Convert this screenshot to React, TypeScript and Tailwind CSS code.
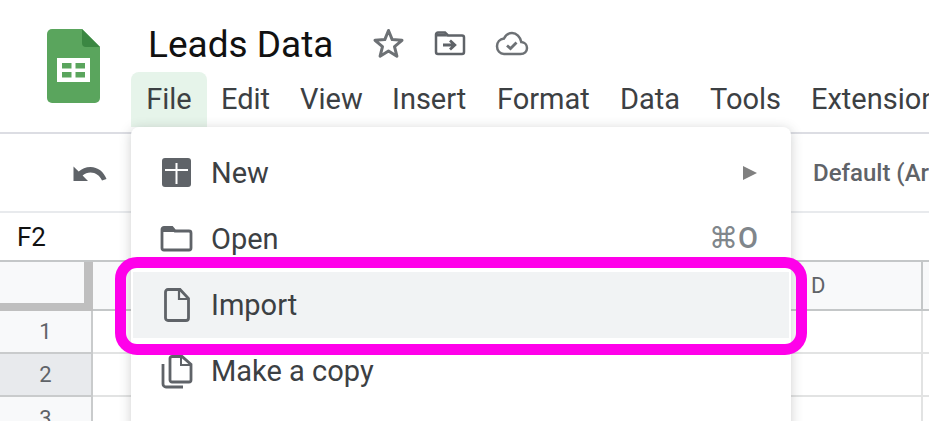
const menus = [
  { label: "Edit", w: "w-[79px]" },
  { label: "View", w: "w-[92px]" },
  { label: "Insert", w: "w-[105px]" },
  { label: "Format", w: "w-[123px]" },
  { label: "Data", w: "w-[90px]" },
  { label: "Tools", w: "w-[101px]" },
  { label: "Extensions", w: "w-[150px]" },
];

const SheetsLogo = () => (
  <svg width="53" height="74" viewBox="0 0 53 74">
    <path d="M5 0H35L53 18V69a5 5 0 0 1-5 5H5a5 5 0 0 1-5-5V5a5 5 0 0 1 5-5Z" fill="#5aa55d" />
    <path d="M35 0L53 18H39a4 4 0 0 1-4-4Z" fill="#3b8742" />
    <path d="M10 29H43V53H10Z" fill="#fff" />
    <path d="M15 34H24.500V39.500H15ZM28.500 34H38V39.500H28.500ZM15 43H24.500V48.500H15ZM28.500 43H38V48.500H28.500Z" fill="#5aa55d" />
  </svg>
);

const MenuRow = ({ icon, label, right, active }: { icon: React.ReactNode; label: string; right?: React.ReactNode; active?: boolean }) => (
  <div className={`flex h-[66px] items-center pr-[33px] ${active ? "bg-[#f1f3f4] mx-[2px] pl-[27px]" : "pl-[29px]"}`}>
    <div className="flex w-[33px] justify-center">{icon}</div>
    <span className="ml-[18px] pt-[2px] text-[29px] text-[#3c4043]">{label}</span>
    <div className="ml-auto">{right}</div>
  </div>
);

const App = () => {
  return (
    <div className="relative h-[421px] w-[929px] overflow-hidden bg-white font-['Roboto',sans-serif]">
      {/* title bar */}
      <div className="flex h-[134px] border-b-2 border-[#dcdde3]">
        <div className="ml-[47px] mt-[29px]">
          <SheetsLogo />
        </div>
        <div className="ml-[31px] min-w-0">
          <div className="mt-[18px] flex h-[54px] items-center pl-[17px]">
            <h1 className="text-[37px] leading-[48px] text-[#111]">Leads Data</h1>
            <svg className="mb-[4px] ml-[39px]" width="33" height="32" viewBox="0 0 33 32" fill="none">
              <path d="M16.500 3.500L20.200 12.600L30 13.300L22.500 19.600L24.900 29.200L16.500 24L8.100 29.200L10.500 19.600L3 13.300L12.800 12.600Z" stroke="#6d7175" strokeWidth="3" strokeLinejoin="round" />
            </svg>
            <svg className="mb-[4px] ml-[29px]" width="32" height="25" viewBox="0 0 32 25" fill="none">
              <path d="M2 3.500a2 2 0 0 1 2-2H11L14 4.500H28a2 2 0 0 1 2 2V21a2 2 0 0 1-2 2H4a2 2 0 0 1-2-2Z" stroke="#5f6368" strokeWidth="2.500" />
              <path d="M2 2.500H11L13.500 5.500H2Z" fill="#5f6368" />
              <path d="M9 14H20M16 9.500L20.800 14L16 18.500" stroke="#5f6368" strokeWidth="2.800" />
            </svg>
            <svg className="mb-[3px] ml-[29px]" width="34" height="25" viewBox="0 0 34 25" fill="none">
              <path d="M9 23H25.500C29.500 23 32 20.300 32 17C32 13.600 29.500 11.200 26.300 11C25.300 5.800 21.500 2 17 2C13.200 2 10.500 4.100 9 7.500C4.800 8 2 11.300 2 15.300C2 19.600 5 23 9 23Z" stroke="#6d7175" strokeWidth="2.500" />
              <path d="M12 14.500L15.500 17.500L21.500 11.500" stroke="#6d7175" strokeWidth="2.800" />
            </svg>
          </div>
          <div className="flex h-[55px] w-[900px] items-center">
            <div className="flex h-[55px] w-[76px] items-center justify-center rounded-t-[8px] bg-[#e6f4ea] text-[29px] text-[#3c4043]">
              File
            </div>
            <div className="w-[14px]" />
            {menus.map((m) => (
              <div key={m.label} className={`${m.w} text-[29px] text-[#3c4043]`}>
                {m.label}
              </div>
            ))}
          </div>
        </div>
      </div>

      {/* toolbar */}
      <div className="flex h-[79px] items-center border-b-2 border-[#e8eaed]">
        <svg className="ml-[73px] shrink-0" width="34" height="18" viewBox="0 0 34 18">
          <path d="M17.500 3C12.800 3 8.800 4.800 5.700 7.500L0.500 2.500V17H15L9.600 11.500C11.800 9.600 14.500 8.400 17.500 8.400C22.500 8.400 26.900 11.500 29 16.500L33.500 15C30.900 7.900 24.800 3 17.500 3Z" fill="#5f6368" />
        </svg>
        <span className="ml-[706px] shrink-0 whitespace-nowrap text-[24px] font-medium text-[#5f6368]">Default (Arial)</span>
      </div>

      {/* formula bar */}
      <div className="flex h-[49px] items-center border-b-2 border-[#c4c7c8] pl-[17px] pt-[2px] text-[26px] text-[#111]">
        F2
      </div>

      {/* grid */}
      <div className="grid grid-cols-[93px_1fr] grid-rows-[49px_43px_43px_43px]">
        <div className="border-b-[8px] border-r-[9px] border-[#bfbfbf] bg-[#f8f9fa]" />
        <div className="flex border-b-2 border-[#c4c7c8] bg-[#f8f9fa]">
          <div className="flex w-[830px] items-center justify-between border-r-2 border-[#c4c7c8]">
            <span className="ml-[718px] text-[22px] text-[#5f6368]">D</span>
          </div>
        </div>
        <div className="flex items-center justify-center border-r-2 border-b-2 border-[#c9cbcc] bg-[#f8f9fa] text-[22px] text-[#5f6368]">1</div>
        <div className="border-b-2 border-[#e2e3e3]">
          <div className="h-full w-[830px] border-r-2 border-[#e2e3e3]" />
        </div>
        <div className="flex items-center justify-center border-r-2 border-b-2 border-[#c9cbcc] bg-[#e8eaed] text-[22px] text-[#5f6368]">2</div>
        <div className="border-b-2 border-[#e2e3e3]">
          <div className="h-full w-[830px] border-r-2 border-[#e2e3e3]" />
        </div>
        <div className="flex items-center justify-center border-r-2 border-[#c9cbcc] bg-[#f8f9fa] text-[22px] text-[#5f6368]">3</div>
        <div>
          <div className="h-full w-[830px] border-r-2 border-[#e2e3e3]" />
        </div>
      </div>

      {/* open file menu */}
      <div className="absolute left-[131px] top-[127px] h-[320px] w-[660px] rounded-t-[8px] bg-white pt-[13px] shadow-[0_2px_12px_rgba(60,64,67,0.25)]">
        <MenuRow
          label="New"
          icon={
            <svg width="30" height="30" viewBox="1 0 30 30">
              <rect x="1" y="0" width="29" height="29" rx="3" fill="#5f6368" />
              <path d="M4 12H27M15.500 5V26" stroke="#fff" strokeWidth="2" />
            </svg>
          }
          right={
            <svg width="16" height="16" viewBox="0 0 16 16">
              <path d="M1 1L15 8L1 15Z" fill="#808080" />
            </svg>
          }
        />
        <MenuRow
          label="Open"
          icon={
            <svg width="33" height="26" viewBox="0 0 33 26" fill="none">
              <path d="M2 3.500a2 2 0 0 1 2-2H12L15 5H29a2 2 0 0 1 2 2V22a2 2 0 0 1-2 2H4a2 2 0 0 1-2-2Z" stroke="#5f6368" strokeWidth="2.800" />
              <path d="M2 2H12L15 6H2Z" fill="#5f6368" />
            </svg>
          }
          right={<span className="text-[29px] font-medium text-[#80868b]">⌘O</span>}
        />
        <MenuRow
          label="Import"
          active
          icon={
            <svg width="26" height="34" viewBox="0 0 26 34" fill="none">
              <path d="M4 1.500H16L24.500 10.500V30a2.500 2.500 0 0 1-2.500 2.500H4A2.500 2.500 0 0 1 1.500 30V4A2.500 2.500 0 0 1 4 1.500Z" stroke="#5f6368" strokeWidth="2.800" />
              <path d="M15 1.500V11H24.500" stroke="#5f6368" strokeWidth="2.200" />
            </svg>
          }
        />
        <MenuRow
          label="Make a copy"
          icon={
            <svg width="32" height="35" viewBox="0 0 32 35" fill="none">
              <path d="M9 4.500a2 2 0 0 1 2-2H21L30 10.500V26a2 2 0 0 1-2 2H11a2 2 0 0 1-2-2Z" stroke="#5f6368" strokeWidth="2.800" />
              <path d="M20 2.500V11H30" stroke="#5f6368" strokeWidth="2" />
              <path d="M2 10V30a3 3 0 0 0 3 3H22" stroke="#5f6368" strokeWidth="2.800" />
            </svg>
          }
        />
      </div>

      {/* highlight drawn over the screenshot */}
      <div className="absolute left-[115px] top-[257px] h-[98px] w-[692px] rounded-[22px] border-[11px] border-[#ff00ea]" />
    </div>
  );
};

export default App;
